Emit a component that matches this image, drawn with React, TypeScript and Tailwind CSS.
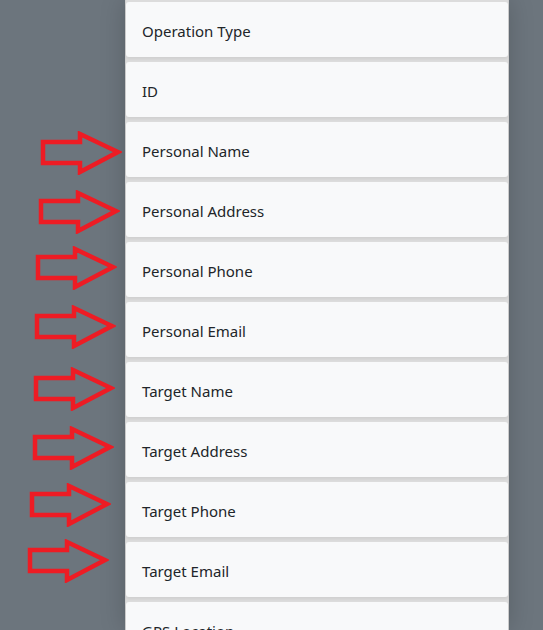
import React from 'react';

const fields = [
  'Operation Type',
  'ID',
  'Personal Name',
  'Personal Address',
  'Personal Phone',
  'Personal Email',
  'Target Name',
  'Target Address',
  'Target Phone',
  'Target Email',
  'GPS Location',
];

// hand-drawn annotation arrows: [left, top]
const arrows: [number, number][] = [
  [40, 131],
  [38, 190],
  [35, 246],
  [34, 305],
  [33, 367],
  [32, 426],
  [29, 483],
  [27, 539],
];

const Arrow: React.FC<{ left: number; top: number }> = ({ left, top }) => (
  <svg
    className="absolute"
    style={{ left, top }}
    width="82"
    height="44"
    viewBox="0 0 82 44"
    fill="none"
  >
    <polygon
      points="3,11 40,11 40,3 78,21 40,41 40,32 3,32"
      stroke="#ed1c24"
      strokeWidth="4.5"
      strokeLinejoin="miter"
    />
  </svg>
);

const App: React.FC = () => {
  return (
    <div className="relative w-full h-[630px] overflow-hidden bg-[#6c757d] font-['Noto_Sans',sans-serif]">
      <div className="ml-[125px] w-[384px] h-full bg-[#dcdcdc] border-l border-r border-[#d0d0d0] shadow-[0_0_24px_rgba(0,0,0,0.18)] pt-[2px] flex flex-col gap-[5px]">
        {fields.map((f) => (
          <div
            key={f}
            className="h-[55px] shrink-0 bg-[#f8f9fa] rounded-[3px] shadow-[0_2px_3px_rgba(0,0,0,0.06)] flex items-center px-4 pt-[4px] text-[15px] text-[#212529]"
          >
            {f}
          </div>
        ))}
      </div>
      {arrows.map(([l, t], i) => (
        <Arrow key={i} left={l} top={t} />
      ))}
    </div>
  );
};

export default App;
